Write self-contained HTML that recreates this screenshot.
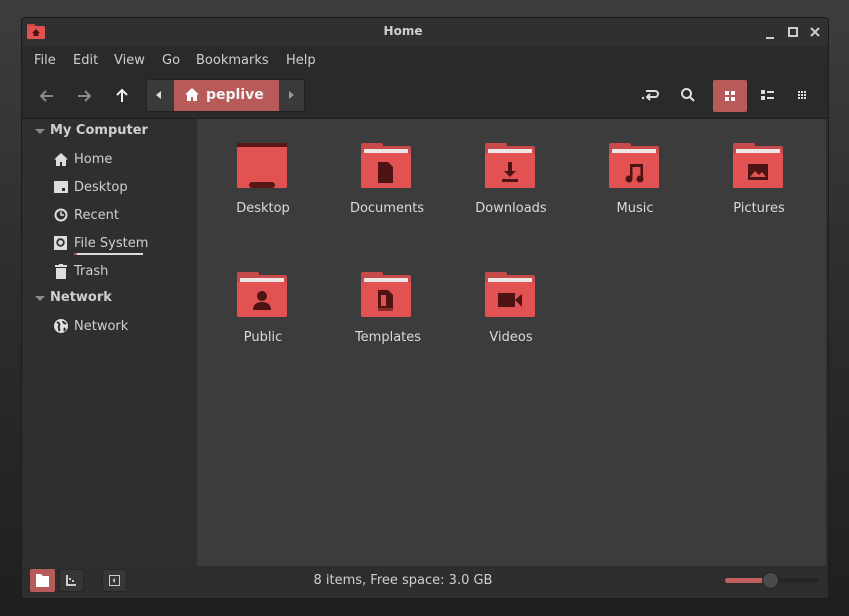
<!DOCTYPE html>
<html><head><meta charset="utf-8"><style>
*{margin:0;padding:0;box-sizing:border-box}
body{width:849px;height:616px;overflow:hidden;background:linear-gradient(180deg,#3d3d3d 0%,#2c2c2c 50%,#1f1f1f 100%);font-family:"DejaVu Sans","Liberation Sans",sans-serif;font-size:13px;color:#d6d6d6;position:relative}
.a{position:absolute}
#win{left:21px;top:17px;width:808px;height:582px;background:#2e2e2e;border:1px solid #1c1c1c;border-radius:4px 4px 0 0;overflow:hidden}
.t{color:#d0d0d0;white-space:nowrap}
.lbl{width:124px;text-align:center;color:#dadada;font-size:13px}
</style></head><body>
<div id="win" class="a">
 <div class="a" style="left:0;top:0;width:808px;height:28px;background:#303030"></div>
 <div class="a" style="left:0;top:28px;width:808px;height:73px;background:#2a2a2a"></div>
 <div class="a" style="left:0;top:100px;width:808px;height:1px;background:#1e1e1e"></div>
 <svg class="a" style="left:5px;top:6px" width="18" height="15"><rect x="0" y="0" width="8" height="3" fill="#c04848"/><rect x="0" y="2" width="18" height="13" rx="1" fill="#e05252"/><path d="M9 5l-4 4h1.5v3h5v-3h1.5z" fill="#4a1414"/></svg>
 <div class="a t" style="left:0;width:762px;top:6px;text-align:center;font-weight:bold;font-size:12px;color:#cfcfcf">Home</div>
 <svg class="a" style="left:742px;top:8px" width="60" height="14" fill="none" stroke="#ccc" stroke-width="2"><path d="M2 12h8"/><rect x="25" y="2" width="8" height="8"/><path d="M47 2l8 8M55 2l-8 8"/></svg>
 <div class="a t" style="left:12px;top:35px">File</div>
 <div class="a t" style="left:51px;top:35px">Edit</div>
 <div class="a t" style="left:92px;top:35px">View</div>
 <div class="a t" style="left:140px;top:35px">Go</div>
 <div class="a t" style="left:174px;top:35px">Bookmarks</div>
 <div class="a t" style="left:264px;top:35px">Help</div>
 <svg class="a" style="left:17px;top:70px" width="120" height="16" fill="none" stroke-width="2"><path d="M14 8H3M7 3L2 8l5 5" stroke="#8a8a8a"/><path d="M39 8h11M46 3l5 5-5 5" stroke="#8a8a8a"/><path d="M83 14V3M78 7l5-5 5 5" stroke="#eee"/></svg>
 <div class="a" style="left:124px;top:61px;width:159px;height:33px;background:#3a3a3a;border:1px solid #222;border-radius:3px"></div>
 <div class="a" style="left:152px;top:62px;width:105px;height:31px;background:#b85a5a"></div>
 <div class="a" style="left:134px;top:73px;width:0;height:0;border-top:4px solid transparent;border-bottom:4px solid transparent;border-right:5px solid #ddd"></div>
 <div class="a" style="left:267px;top:73px;width:0;height:0;border-top:4px solid transparent;border-bottom:4px solid transparent;border-left:5px solid #999"></div>
 <svg class="a" style="left:163px;top:70px" width="14" height="13"><path d="M7 0L0 6.5h2V13h4V9h2v4h4V6.5h2z" fill="#fff"/></svg>
 <div class="a t" style="left:184px;top:69px;font-weight:bold;font-size:14px;color:#f4f4f4">peplive</div>
 <svg class="a" style="left:619px;top:69px" width="20" height="16" fill="none" stroke="#ddd" stroke-width="2"><path d="M5 4h9a3 3 0 0 1 0 6H6M9 7l-3 3 3 3"/><circle cx="2" cy="11" r="1.2" fill="#ddd" stroke="none"/></svg>
 <svg class="a" style="left:658px;top:69px" width="16" height="16" fill="none" stroke="#ddd" stroke-width="2"><circle cx="6.5" cy="6.5" r="4.5"/><path d="M10 10l4 4"/></svg>
 <div class="a" style="left:691px;top:62px;width:34px;height:32px;background:#b85a5a;border-radius:2px"></div>
 <svg class="a" style="left:703px;top:73px" width="12" height="12" fill="#fff"><rect x="0" y="0" width="4" height="4"/><rect x="6" y="0" width="4" height="4"/><rect x="0" y="6" width="4" height="4"/><rect x="6" y="6" width="4" height="4"/></svg>
 <svg class="a" style="left:739px;top:72px" width="14" height="12" fill="#ddd"><rect x="0" y="0" width="4" height="4"/><rect x="6" y="1" width="7" height="2"/><rect x="0" y="6" width="4" height="4"/><rect x="6" y="7" width="7" height="2"/></svg>
 <svg class="a" style="left:776px;top:73px" width="10" height="10" fill="#ddd"><rect x="0" y="0" width="2" height="2"/><rect x="3" y="0" width="2" height="2"/><rect x="6" y="0" width="2" height="2"/><rect x="0" y="3" width="2" height="2"/><rect x="3" y="3" width="2" height="2"/><rect x="6" y="3" width="2" height="2"/><rect x="0" y="6" width="2" height="2"/><rect x="3" y="6" width="2" height="2"/><rect x="6" y="6" width="2" height="2"/></svg>
 <div class="a" style="left:0;top:101px;width:175px;height:447px;background:#2f2f2f"></div>
 <div class="a" style="left:175px;top:101px;width:629px;height:447px;background:#3c3c3c"></div>
 <div class="a" style="left:13px;top:111px;border-left:5px solid transparent;border-right:5px solid transparent;border-top:5px solid #888"></div>
 <div class="a t" style="left:28px;top:105px;font-weight:bold">My Computer</div>
 <svg class="a" style="left:32px;top:135px" width="14" height="13"><path d="M7 0L0 6.5h2V13h4V9h2v4h4V6.5h2z" fill="#ddd"/></svg>
 <div class="a t" style="left:52px;top:134px">Home</div>
 <svg class="a" style="left:32px;top:163px" width="14" height="12"><path d="M0 0h14v12H0z" fill="#ddd"/><rect x="8" y="7" width="3" height="3" fill="#2f2f2f"/></svg>
 <div class="a t" style="left:52px;top:162px">Desktop</div>
 <svg class="a" style="left:32px;top:190px" width="14" height="14" fill="none" stroke="#ddd" stroke-width="2"><circle cx="7" cy="7" r="5.5"/><path d="M7 3.5V7h3" stroke-width="1.5"/></svg>
 <div class="a t" style="left:52px;top:190px">Recent</div>
 <svg class="a" style="left:32px;top:218px" width="13" height="14"><rect width="13" height="14" fill="#ddd"/><circle cx="6.5" cy="6.5" r="3.3" fill="none" stroke="#2f2f2f" stroke-width="1.8"/></svg>
 <div class="a t" style="left:52px;top:218px">File System</div>
 <div class="a" style="left:52px;top:235px;width:69px;height:2px;background:#ddd"></div>
 <div class="a" style="left:52px;top:235px;width:3px;height:2px;background:#b85a5a"></div>
 <svg class="a" style="left:33px;top:246px" width="12" height="15" fill="#ddd"><rect x="0" y="1" width="12" height="2"/><rect x="4" y="0" width="4" height="2"/><rect x="1" y="4" width="10" height="11"/></svg>
 <div class="a t" style="left:52px;top:246px">Trash</div>
 <div class="a" style="left:13px;top:278px;border-left:5px solid transparent;border-right:5px solid transparent;border-top:5px solid #888"></div>
 <div class="a t" style="left:28px;top:272px;font-weight:bold">Network</div>
 <svg class="a" style="left:32px;top:301px" width="14" height="14"><circle cx="7" cy="7" r="7" fill="#ddd"/><path d="M3 3c2 1 3 2 2 4s1 3 0 5M9 2c0 2 2 2 3 3M10 9c1 1 1 2 0 3" stroke="#2f2f2f" stroke-width="2" fill="none"/></svg>
 <div class="a t" style="left:52px;top:301px">Network</div>
 <svg width="0" height="0" style="position:absolute"><defs>
  <g id="f"><rect x="0" y="0" width="22" height="8" rx="2" fill="#c84b4b"/><rect x="0" y="3" width="50" height="42" rx="2" fill="#c84b4b"/><rect x="3" y="6" width="44" height="6" fill="#f1e6e6"/><rect x="0" y="10" width="50" height="35" rx="2" fill="#e25252"/></g>
 </defs></svg>
 <svg class="a" style="left:215px;top:125px" width="50" height="45"><rect x="0" y="0" width="50" height="45" rx="2" fill="#e25252"/><rect x="0" y="0" width="50" height="4" fill="#5a1515"/><rect x="12" y="39" width="26" height="6" rx="3" fill="#5a1515"/></svg>
 <svg class="a" style="left:339px;top:125px" width="50" height="45"><use href="#f"/><path d="M17 19h10l5 5v16H17z" fill="#4e1414"/></svg>
 <svg class="a" style="left:463px;top:125px" width="50" height="45"><use href="#f"/><path d="M23 19h4v9h4l-6 6-6-6h4z" fill="#4e1414"/><rect x="17" y="36" width="16" height="3" fill="#4e1414"/></svg>
 <svg class="a" style="left:587px;top:125px" width="50" height="45"><use href="#f"/><g fill="#4e1414"><rect x="21" y="21" width="13" height="3"/><rect x="21" y="21" width="2.5" height="14"/><rect x="31.5" y="21" width="2.5" height="14"/><circle cx="20" cy="36" r="3.5"/><circle cx="31" cy="36" r="3.5"/></g></svg>
 <svg class="a" style="left:711px;top:125px" width="50" height="45"><use href="#f"/><rect x="15" y="21" width="20" height="16" fill="#4e1414"/><path d="M17 34l5-6 4 4 3-3 4 5z" fill="#e25252"/></svg>
 <svg class="a" style="left:215px;top:254px" width="50" height="45"><use href="#f"/><g fill="#4e1414"><circle cx="25" cy="24" r="5"/><path d="M16 38c0-6 4-8 9-8s9 2 9 8z"/></g></svg>
 <svg class="a" style="left:339px;top:254px" width="50" height="45"><use href="#f"/><path d="M17 18h10l5 5v13H17z" fill="#4e1414"/><rect x="20" y="23" width="5" height="11" fill="#e25252"/><path d="M17 36h15v3H17z" fill="#4e1414" opacity=".6"/></svg>
 <svg class="a" style="left:463px;top:254px" width="50" height="45"><use href="#f"/><rect x="13" y="21" width="17" height="14" fill="#4e1414"/><path d="M30 28l7-6v13z" fill="#4e1414"/></svg>
 <div class="a lbl" style="left:179px;top:183px">Desktop</div>
 <div class="a lbl" style="left:303px;top:183px">Documents</div>
 <div class="a lbl" style="left:427px;top:183px">Downloads</div>
 <div class="a lbl" style="left:551px;top:183px">Music</div>
 <div class="a lbl" style="left:675px;top:183px">Pictures</div>
 <div class="a lbl" style="left:179px;top:312px">Public</div>
 <div class="a lbl" style="left:304px;top:312px">Templates</div>
 <div class="a lbl" style="left:427px;top:312px">Videos</div>
 <div class="a" style="left:8px;top:551px;width:25px;height:23px;background:#b85a5a;border-radius:2px"></div>
 <svg class="a" style="left:14px;top:556px" width="13" height="13"><path d="M0 0h5l2 2h6v11H0z" fill="#fff"/></svg>
 <div class="a" style="left:37px;top:551px;width:25px;height:23px;background:#363636;border:1px solid #262626;border-radius:2px"></div>
 <svg class="a" style="left:44px;top:557px" width="11" height="12" fill="#ccc"><rect x="0" y="0" width="2" height="11"/><rect x="0" y="9" width="10" height="2"/><rect x="3" y="3" width="2" height="2"/><rect x="6" y="5" width="2" height="2"/></svg>
 <div class="a" style="left:80px;top:551px;width:25px;height:23px;background:#363636;border:1px solid #262626;border-radius:2px"></div>
 <svg class="a" style="left:87px;top:557px" width="11" height="11"><rect x="0.5" y="0.5" width="10" height="10" fill="none" stroke="#ccc"/><path d="M6 3L3.5 5.5 6 8z" fill="#ccc"/></svg>
 <div class="a t" style="left:0;width:762px;top:555px;text-align:center;font-size:13px">8 items, Free space: 3.0 GB</div>
 <div class="a" style="left:703px;top:560px;width:94px;height:5px;background:#262626;border-radius:3px"></div>
 <div class="a" style="left:703px;top:560px;width:42px;height:5px;background:#c06060;border-radius:3px"></div>
 <div class="a" style="left:740px;top:554px;width:17px;height:17px;background:#4a4a4a;border:1px solid #222;border-radius:50%"></div>
</div>
</body></html>
